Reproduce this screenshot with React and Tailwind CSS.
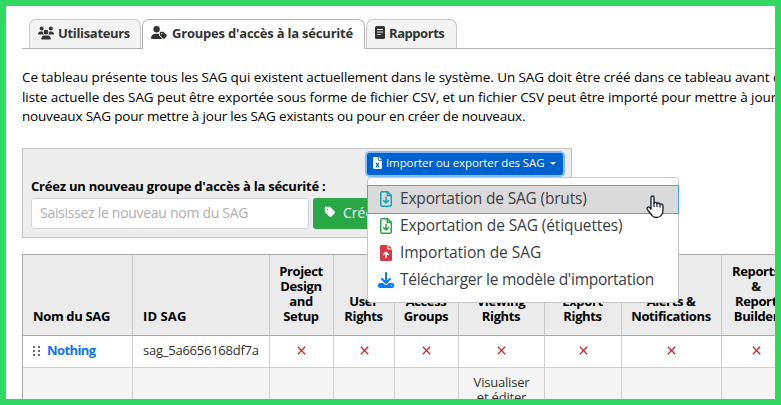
import React from "react";
import { FaUsers, FaUserTag, FaTag, FaFileExcel, FaDownload } from "react-icons/fa6";

function ReportIcon() {
  return (
    <svg width="10" height="13" viewBox="0 0 10 13" className="shrink-0">
      <rect width="10" height="13" rx="1.6" fill="#333" />
      <path d="M2 3.5h6M2 6h6M2 8.5h4" stroke="#f3f3f3" strokeWidth="1" />
    </svg>
  );
}

function OutlineFile({ color }) {
  return (
    <svg width="12" height="16" viewBox="0 0 12 16" fill="none" stroke={color} strokeWidth="1.5" strokeLinejoin="round" className="shrink-0">
      <path d="M.75 2Q.75.75 2 .75h5.6l3.65 3.6V14q0 1.25-1.25 1.25H2Q.75 15.25.75 14Z" />
      <path d="M7.3.9v3.7h3.8" />
      <path d="M6 6.2v5.6M3.6 9.6 6 12l2.4-2.4" strokeLinecap="round" />
    </svg>
  );
}

function UploadFile() {
  return (
    <svg width="12" height="16" viewBox="0 0 12 16" className="shrink-0">
      <path d="M1.5 0H7.5V4.5H12V14.5Q12 16 10.500 16H1.500Q0 16 0 14.500V1.500Q0 0 1.500 0ZM8.500 0L12 3.500H8.500Z" fill="#dc3545" />
      <path d="M6 12.500V7.500M3.700 9.500 6 7.200l2.300 2.300" fill="none" stroke="#fff" strokeWidth="1.500" strokeLinecap="round" />
    </svg>
  );
}

function Grip() {
  return (
    <svg width="8" height="12" viewBox="0 0 8 12" fill="#6b6b6b" className="shrink-0">
      {[1, 5, 9].map((y) => (
        <g key={y}>
          <rect x="0" y={y} width="2" height="2" />
          <rect x="5" y={y} width="2" height="2" />
        </g>
      ))}
    </svg>
  );
}

function Cross() {
  return (
    <svg width="9" height="9" viewBox="0 0 9 9" className="mx-auto" stroke="#d9232e" strokeWidth="1.300">
      <path d="M.8.8l7.400 7.400M8.200.8.8 8.200" />
    </svg>
  );
}

function Pointer() {
  return (
    <svg width="19" height="24" viewBox="0 0 19 24" className="absolute left-[640px] top-[189px]">
      <path
        d="M5 2.500Q5 1 6.500 1T8 2.500V8.200Q8.300 7.300 9.500 7.300T11 8.600Q11.300 8 12.400 8T14 9.300Q14.300 8.800 15.200 8.900 17 9 17 11V15Q17 18 15.500 20 13.800 22.500 10.500 22.500 7.400 22.500 6 20.500L1.200 14.300Q.6 12.600 2 12 3.200 11.700 5 14Z"
        fill="#fff"
        stroke="#111827"
        strokeWidth="1.300"
        strokeLinejoin="round"
      />
      <path d="M8 8v4M11 8.500V12M14 9.500V12.500" stroke="#111827" strokeWidth="1.200" />
    </svg>
  );
}

const heads = [
  ["Project", "Design", "and", "Setup"],
  ["User", "Rights"],
  ["Access", "Groups"],
  ["Viewing", "Rights"],
  ["Export", "Rights"],
  ["Alerts &", "Notifications"],
  ["Reports", "&", "Report", "Builder"],
];

const grid = "grid grid-cols-[110px_137px_64px_61px_64px_86px_77px_100px_70px]";

export default function App() {
  return (
    <div className="relative h-[405px] w-[781px] overflow-hidden border-[6px] border-[#30d962] bg-white font-['Open_Sans',sans-serif] text-black">
      <div className="w-[900px] pl-4 pt-[13px]">
        <div className="flex h-[30px] border-b border-[#b4b4b4] pl-[7px] text-[13px] font-bold leading-4 text-[#333]">
          <div className="flex h-[29px] w-[112px] items-center gap-[4px] rounded-t-[7px] border border-b-0 border-[#c8c8c8] bg-[#f3f3f3] pb-[3px] pl-2 whitespace-nowrap">
            <FaUsers className="h-[14px] w-4 shrink-0" />
            <span className="tracking-[-0.33px]">Utilisateurs</span>
          </div>
          <div className="ml-[1px] flex h-[30px] w-[223px] items-center gap-[5px] rounded-t-[7px] border border-b-0 border-[#b4b4b4] bg-white pb-[4px] pl-2 whitespace-nowrap">
            <FaUserTag className="h-[13px] w-4 shrink-0" />
            <span className="tracking-[-0.21px]">Groupes d'accès à la sécurité</span>
          </div>
          <div className="ml-[1px] flex h-[29px] w-[91px] items-center gap-[4px] rounded-t-[7px] border border-b-0 border-[#c8c8c8] bg-[#f3f3f3] pb-[3px] pl-2 whitespace-nowrap">
            <ReportIcon />
            <span className="tracking-[-0.45px]">Rapports</span>
          </div>
        </div>

        <div className="mt-[19px] text-[13.5px] leading-[19.500px] whitespace-nowrap">
          <p><span className="tracking-[-0.085px]">Ce tableau présente tous les SAG qui existent actuellement dans le système. Un SAG doit être créé dans ce tableau avant</span> de</p>
          <p><span className="tracking-[-0.075px]">liste actuelle des SAG peut être exportée sous forme de fichier CSV, et un fichier CSV peut être importé pour mettre à jour</span></p>
          <p><span className="tracking-[-0.19px]">nouveaux SAG pour mettre à jour les SAG existants ou pour en créer de nouveaux.</span></p>
        </div>

        <div className="mt-[21px] h-[90px] w-[550px] border border-[#c4c4c4] bg-[#ededed] pl-2 whitespace-nowrap">
          <div className="ml-[336px] mt-[4px] flex h-[22px] w-[196px] items-center rounded-[3px] bg-[#0062cc] pb-[1px] pl-[6px] text-[11.500px] font-medium text-white ring-2 ring-[#83bbf8]">
            <FaFileExcel className="mr-1 h-[12px] w-[9px]" />
            <span className="tracking-[-0.09px]">Importer ou exporter des SAG</span>
            <i className="ml-[6px] border-x-[3px] border-t-[3px] border-x-transparent border-t-white" />
          </div>
          <div className="mt-[1px] text-[13px] font-bold leading-5"><span className="tracking-[-0.23px]">Créez un nouveau groupe d'accès à la sécurité :</span></div>
          <div className="mt-[2px] flex">
            <div className="h-[31px] w-[278px] rounded-[3px] border border-[#ced4da] bg-white pl-2 text-[14px] leading-[28px] text-[#b0b0b0]"><span className="tracking-[-0.29px]">Saisissez le nouveau nom du SAG</span></div>
            <div className="ml-1 flex h-[31px] w-[100px] items-center rounded-[3px] bg-[#28a745] pl-[11px] pb-[2px] text-[14px] font-medium text-white">
              <FaTag className="mr-[7px] h-3 w-3" /> Créer
            </div>
          </div>
        </div>

        <div className="mt-4 w-[770px] border-l border-t border-[#a8a8a8] text-center text-[13px] leading-[15px] whitespace-nowrap">
          <div className={`${grid} h-[81px] border-b border-[#a8a8a8] bg-[#ebebeb] font-bold`}>
            <div className="flex items-end border-r border-[#c8c8c8] pb-[11px] pl-[10px]"><span className="tracking-[-0.35px]">Nom du SAG</span></div>
            <div className="flex items-end border-r border-[#c8c8c8] pb-[11px] pl-[10px]"><span className="tracking-[0.1px]">ID SAG</span></div>
            {heads.map((lines, i) => (
              <div key={i} className="flex flex-col items-center justify-end border-r border-[#c8c8c8] pb-[11px] pr-[1px]">
                {lines.map((l) => <span key={l} className="tracking-[-0.38px]">{l}</span>)}
              </div>
            ))}
          </div>
          <div className={`${grid} h-8 border-b border-[#d0d0d0] bg-white`}>
            <div className="flex items-center gap-[6px] border-r border-[#d0d0d0] pb-[1px] pl-[10px]"><Grip /><span className="font-bold tracking-[-0.6px] text-[#0d75fd]">Nothing</span></div>
            <div className="flex items-center border-r border-[#d0d0d0] pb-[1px] pl-[10px] text-[#333]"><span className="tracking-[-0.24px]">sag_5a6656168df7a</span></div>
            {heads.map((_, i) => <div key={i} className="flex items-center border-r border-[#d0d0d0] pb-[2px]"><Cross /></div>)}
          </div>
          <div className={`${grid} h-12 bg-[#f5f5f5] text-[#333]`}>
            <div className="border-r border-[#d0d0d0]" />
            <div className="border-r border-[#d0d0d0]" />
            {heads.map((_, i) => (
              <div key={i} className="border-r border-[#d0d0d0] pt-[7px] tracking-[-0.2px]">{i === 3 && <>Visualiser<br />et éditer</>}</div>
            ))}
          </div>
        </div>
      </div>

      <div className="absolute left-[361px] top-[171px] h-[126px] w-[312px] rounded-[4px] border border-[#c6c6c6] bg-white pt-[7px] text-[15.5px] text-[#3c4045] whitespace-nowrap">
        <div className="-mx-[1px] flex h-[29px] items-center border border-[#4b9fff] bg-[#dadada] pl-3 pb-[2px]">
          <OutlineFile color="#17a2b8" /><span className="ml-2 tracking-[-0.19px]">Exportation de SAG (bruts)</span>
        </div>
        <div className="flex h-[27px] items-center pl-3 pb-[4px]">
          <OutlineFile color="#28a745" /><span className="ml-2 tracking-[-0.12px]">Exportation de SAG (étiquettes)</span>
        </div>
        <div className="flex h-[27px] items-center pl-3 pb-[4px]">
          <UploadFile /><span className="ml-2 tracking-[-0.05px]">Importation de SAG</span>
        </div>
        <div className="flex h-[27px] items-center pl-[10px] pb-[4px]">
          <FaDownload className="h-4 w-4 shrink-0 text-[#007bff]" /><span className="ml-[6px] tracking-[-0.26px]">Télécharger le modèle d'importation</span>
        </div>
      </div>
      <Pointer />
    </div>
  );
}
